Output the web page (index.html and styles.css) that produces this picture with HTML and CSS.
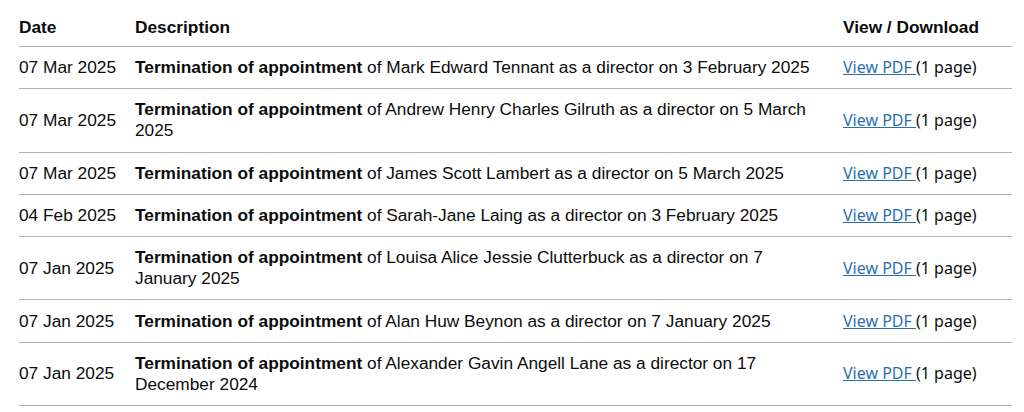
FILE: index.html
```html
<!DOCTYPE html>
<html lang="en">
<head>
<meta charset="utf-8">
<title>Filing history</title>
<link rel="stylesheet" href="styles.css">
</head>
<body>
<div class="page">
<table class="filings">
  <colgroup>
    <col class="col-date">
    <col class="col-desc">
    <col class="col-view">
  </colgroup>
  <thead>
    <tr><th>Date</th><th>Description</th><th>View / Download</th></tr>
  </thead>
  <tbody>
    <tr><td class="date">07 Mar 2025</td><td><strong>Termination of appointment</strong> of Mark Edward Tennant as a director on 3 February 2025</td><td><a href="#" class="pdf">View PDF </a><span class="pages">(1 page)</span></td></tr>
    <tr><td class="date">07 Mar 2025</td><td><strong>Termination of appointment</strong> of Andrew Henry Charles Gilruth as a director on 5 March 2025</td><td><a href="#" class="pdf">View PDF </a><span class="pages">(1 page)</span></td></tr>
    <tr><td class="date">07 Mar 2025</td><td><strong>Termination of appointment</strong> of James Scott Lambert as a director on 5 March 2025</td><td><a href="#" class="pdf">View PDF </a><span class="pages">(1 page)</span></td></tr>
    <tr><td class="date">04 Feb 2025</td><td><strong>Termination of appointment</strong> of Sarah-Jane Laing as a director on 3 February 2025</td><td><a href="#" class="pdf">View PDF </a><span class="pages">(1 page)</span></td></tr>
    <tr><td class="date">07 Jan 2025</td><td><strong>Termination of appointment</strong> of Louisa Alice Jessie Clutterbuck as a director on 7 January 2025</td><td><a href="#" class="pdf">View PDF </a><span class="pages">(1 page)</span></td></tr>
    <tr><td class="date">07 Jan 2025</td><td><strong>Termination of appointment</strong> of Alan Huw Beynon as a director on 7 January 2025</td><td><a href="#" class="pdf">View PDF </a><span class="pages">(1 page)</span></td></tr>
    <tr><td class="date">07 Jan 2025</td><td><strong>Termination of appointment</strong> of Alexander Gavin Angell Lane as a director on 17 December 2024</td><td><a href="#" class="pdf">View PDF </a><span class="pages">(1 page)</span></td></tr>
  </tbody>
</table>
</div>
</body>
</html>
```

FILE: styles.css
```css
html, body {
  margin: 0;
  padding: 0;
  background: #ffffff;
}

.page {
  padding: 7px 12px 0 19px;
  font-family: "Liberation Sans", Arial, sans-serif;
  font-size: 17.3px;
  line-height: 21px;
  color: #0b0c0c;
}

.filings {
  width: 993px;
  border-collapse: collapse;
  table-layout: fixed;
}

.col-date { width: 116px; }
.col-desc { width: 708px; }
.col-view { width: 169px; }

.filings th,
.filings td {
  text-align: left;
  vertical-align: middle;
  padding: 10.15px 20px 10.15px 0;
  border-bottom: 1px solid #b1b4b6;
}

.filings th {
  font-weight: 700;
  padding-top: 10px;
  padding-bottom: 8px;
}

.filings td.date {
  white-space: nowrap;
  padding-right: 0;
}

.filings td strong {
  font-weight: 700;
}

.pdf {
  font-family: "Noto Sans", "Open Sans", sans-serif;
  font-size: 16px;
  color: #2a6fb0;
  text-decoration: underline;
}

.pages {
  font-family: "Noto Sans", "Open Sans", sans-serif;
  font-size: 16px;
  white-space: nowrap;
}

.filings td:last-child,
.filings th:last-child {
  white-space: nowrap;
  padding-right: 0;
}
```
